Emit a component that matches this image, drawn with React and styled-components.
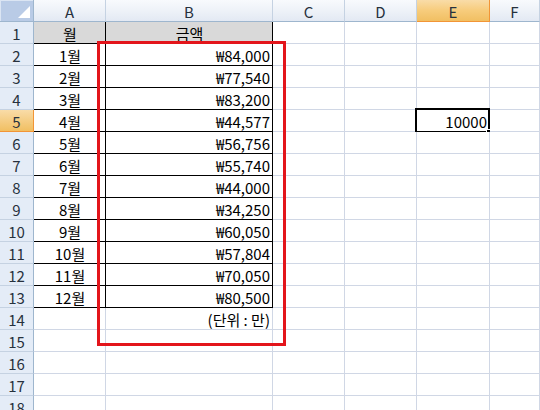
import React from 'react';
import styled, {createGlobalStyle, css} from 'styled-components';

const GlobalStyle = createGlobalStyle`
    html, body {
        margin: 0;
        padding: 0;
        background: #fff;
        overflow: hidden;
    }
    body {
        font-family: "Noto Sans CJK KR", "Noto Sans", sans-serif;
    }
`;

const COLS = ['A', 'B', 'C', 'D', 'E', 'F'];
const ROW_COUNT = 18;

const data = [
    ['1월', '₩84,000'],
    ['2월', '₩77,540'],
    ['3월', '₩83,200'],
    ['4월', '₩44,577'],
    ['5월', '₩56,756'],
    ['6월', '₩55,740'],
    ['7월', '₩44,000'],
    ['8월', '₩34,250'],
    ['9월', '₩60,050'],
    ['10월', '₩57,804'],
    ['11월', '₩70,050'],
    ['12월', '₩80,500'],
];

const Sheet = styled.div`
    position: relative;
    width: 540px;
    height: 410px;
    display: grid;
    grid-template-columns: 34px 72px 167px 72px 72px 73px 1fr;
    grid-auto-rows: 22px;
    font-size: 15px;
    color: #000;
    overflow: hidden;
`;

const Corner = styled.div`
    box-sizing: border-box;
    background: #b9cbe6;
    border-right: 1px solid #9eb6ce;
    border-bottom: 1px solid #9eb6ce;
    box-shadow: inset 1px 1px 0 #dbe5f3;
    position: relative;
    &::after {
        content: '';
        position: absolute;
        right: 3px;
        bottom: 3px;
        width: 0;
        height: 0;
        border-left: 12px solid transparent;
        border-bottom: 12px solid #fff;
    }
`;

const headerLook = css`
    box-sizing: border-box;
    display: flex;
    align-items: center;
    justify-content: center;
    color: #27313d;
    font-size: 15px;
    padding-top: 1px;
`;

const ColHeader = styled.div`
    ${headerLook};
    border-right: 1px solid ${p => (p.$active ? '#f29536' : '#c5d2e2')};
    border-bottom: 1px solid ${p => (p.$active ? '#f29536' : '#9eb6ce')};
    background: ${p =>
        p.$active
            ? 'linear-gradient(#f9dca8, #f7cc7c 50%, #f1bf62)'
            : 'linear-gradient(#f8fafd, #eef2f8 50%, #e3e9f3)'};
`;

const RowHeader = styled.div`
    ${headerLook};
    border-right: 1px solid ${p => (p.$active ? '#f29536' : '#9eb6ce')};
    border-bottom: 1px solid ${p => (p.$active ? '#f29536' : '#c5d2e2')};
    background: ${p => (p.$active ? 'linear-gradient(#f9dca8, #f1bf62)' : '#e4ecf7')};
`;

const Cell = styled.div`
    box-sizing: border-box;
    position: relative;
    display: flex;
    align-items: center;
    justify-content: ${p => p.$align || 'flex-start'};
    padding: 1px 2px 0 3px;
    white-space: nowrap;
    background: ${p => p.$fill || '#fff'};
    border-right: 1px solid ${p => (p.$boxed ? '#000' : '#d0d7e5')};
    border-bottom: 1px solid ${p => (p.$boxed ? '#000' : '#d0d7e5')};
`;

const Selection = styled.div`
    position: absolute;
    left: -2px;
    top: -2px;
    right: -1px;
    bottom: -2px;
    border: 2px solid #000;
    box-sizing: border-box;
    pointer-events: none;
    &::after {
        content: '';
        position: absolute;
        right: -4px;
        bottom: -4px;
        width: 6px;
        height: 6px;
        background: #000;
        border: 1px solid #fff;
        box-sizing: border-box;
    }
`;

const RedBox = styled.div`
    position: absolute;
    left: 97px;
    top: 41px;
    width: 189px;
    height: 305px;
    border: 3px solid #e3151b;
    box-sizing: border-box;
    pointer-events: none;
`;

function cellContent(row, col) {
    if (row === 1 && col === 'A') return {text: '월', align: 'center', fill: '#d9d9d9', boxed: true};
    if (row === 1 && col === 'B') return {text: '금액', align: 'center', fill: '#d9d9d9', boxed: true};
    if (row >= 2 && row <= 13) {
        const [month, amount] = data[row - 2];
        if (col === 'A') return {text: month, align: 'center', boxed: true};
        if (col === 'B') return {text: amount, align: 'flex-end', boxed: true};
    }
    if (row === 14 && col === 'B') return {text: '(단위 : 만)', align: 'flex-end'};
    if (row === 5 && col === 'E') return {text: '10000', align: 'flex-end', selected: true};
    return {text: ''};
}

const App = () => {
    const rows = Array.from({length: ROW_COUNT}, (_, i) => i + 1);

    return (
        <>
            <GlobalStyle />
            <Sheet>
                <Corner />
                {COLS.map(c => (
                    <ColHeader key={c} $active={c === 'E'}>{c}</ColHeader>
                ))}
                {rows.map(r => (
                    <React.Fragment key={r}>
                        <RowHeader $active={r === 5}>{r}</RowHeader>
                        {COLS.map(c => {
                            const cell = cellContent(r, c);
                            return (
                                <Cell key={c} $align={cell.align} $fill={cell.fill} $boxed={cell.boxed}>
                                    {cell.text}
                                    {cell.selected && <Selection />}
                                </Cell>
                            );
                        })}
                    </React.Fragment>
                ))}
                <RedBox />
            </Sheet>
        </>
    );
};

export default App;
